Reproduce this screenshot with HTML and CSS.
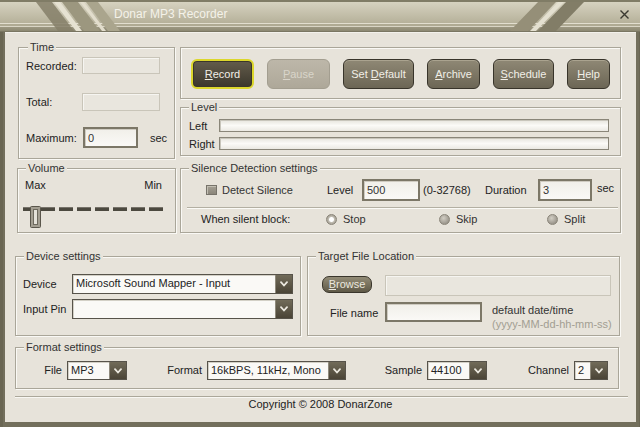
FILE: index.html
```html
<!DOCTYPE html>
<html>
<head>
<meta charset="utf-8">
<title>Donar MP3 Recorder</title>
<link rel="stylesheet" href="styles.css">
</head>
<body>
<div class="window">
  <div class="titlebar">
    <svg class="stripes" width="640" height="32" viewBox="0 0 640 32">
      <polygon points="36,2 52,2 74,31 58,31" fill="#857f68" opacity="0.85"/>
      <polygon points="54,2 60,2 82,31 76,31" fill="#e6e2d2"/>
      <polygon points="62,2 78,2 100,31 84,31" fill="#9c977f"/>
      <polygon points="80,2 84,2 106,31 102,31" fill="#e2ddcc"/>
      <polygon points="86,2 98,2 120,31 108,31" fill="#aaa58d"/>
      <polygon points="538,2 556,2 528,31 510,31" fill="#958f78"/>
      <polygon points="558,2 564,2 536,31 530,31" fill="#e4e0d0"/>
      <polygon points="566,2 584,2 556,31 538,31" fill="#827d67"/>
    </svg>
    <span class="title">Donar MP3 Recorder</span>
    <svg class="close" width="9" height="9" viewBox="0 0 9 9">
      <path d="M0.5 0.5 L8.5 8.5 M8.5 0.5 L0.5 8.5" stroke="#3a3930" stroke-width="1.4" fill="none"/>
    </svg>
  </div>

  <div class="content">
    <div class="row1">
      <div class="group time">
        <span class="legend">Time</span>
        <div class="trow r1"><span class="tlabel">Recorded:</span><span class="dbox w78 h17"></span></div>
        <div class="trow r2"><span class="tlabel">Total:</span><span class="dbox w78 h18"></span></div>
        <div class="trow"><span class="tlabel l57">Maximum:</span><span class="edit w55 h21">0</span><span class="unit">sec</span></div>
      </div>
      <div class="rightcol">
        <div class="group btns">
          <span class="btn rec w63"><u>R</u>ecord</span>
          <span class="btn off w63"><u>P</u>ause</span>
          <span class="btn w71">Set <u>D</u>efault</span>
          <span class="btn w53"><u>A</u>rchive</span>
          <span class="btn w61"><u>S</u>chedule</span>
          <span class="btn w43"><u>H</u>elp</span>
        </div>
        <div class="group level">
          <span class="legend">Level</span>
          <div class="lrow"><span class="llabel">Left</span><span class="bar"></span></div>
          <div class="lrow"><span class="llabel">Right</span><span class="bar"></span></div>
        </div>
      </div>
    </div>

    <div class="row2">
      <div class="group vol">
        <span class="legend">Volume</span>
        <div class="vrow"><span>Max</span><span>Min</span></div>
        <svg class="slider" width="145" height="24" viewBox="0 0 145 24">
          <g fill="#4c493f">
            <rect x="1" y="2" width="14" height="4"/>
            <rect x="19" y="2" width="14" height="4"/>
            <rect x="37" y="2" width="14" height="4"/>
            <rect x="55" y="2" width="14" height="4"/>
            <rect x="73" y="2" width="14" height="4"/>
            <rect x="91" y="2" width="14" height="4"/>
            <rect x="109" y="2" width="14" height="4"/>
            <rect x="127" y="2" width="14" height="4"/>
          </g>
          <g fill="#77736a">
            <rect x="1" y="2" width="14" height="1"/>
            <rect x="19" y="2" width="14" height="1"/>
            <rect x="37" y="2" width="14" height="1"/>
            <rect x="55" y="2" width="14" height="1"/>
            <rect x="73" y="2" width="14" height="1"/>
            <rect x="91" y="2" width="14" height="1"/>
            <rect x="109" y="2" width="14" height="1"/>
            <rect x="127" y="2" width="14" height="1"/>
          </g>
          <rect x="8.5" y="1.5" width="10" height="21" rx="1" fill="#a39e91" stroke="#5a564b"/>
          <rect x="11.5" y="4.5" width="4" height="15" fill="#e4e1d8" stroke="#6d695d"/>
        </svg>
      </div>
      <div class="group sil">
        <span class="legend">Silence Detection settings</span>
        <div class="srow1">
          <span class="ccell"><span class="chk"></span>Detect Silence</span>
          <span class="slab">Level</span>
          <span class="edit w58 h22">500</span>
          <span class="range">(0-32768)</span>
          <span class="dlab">Duration</span>
          <span class="edit w54 h22">3</span>
          <span class="sunit">sec</span>
        </div>
        <div class="ssep"></div>
        <div class="srow2">
          <span class="wlab">When silent block:</span>
          <span class="rcell w113"><span class="radio on"></span>Stop</span>
          <span class="rcell w108"><span class="radio"></span>Skip</span>
          <span class="rcell"><span class="radio"></span>Split</span>
        </div>
      </div>
    </div>

    <div class="row3">
      <div class="group dev">
        <span class="legend">Device settings</span>
        <div class="drow">
          <span class="dlabel">Device</span>
          <span class="combo w221 h20"><span class="ctext">Microsoft Sound Mapper - Input</span><span class="dd"><svg width="8" height="6" viewBox="0 0 8 6"><path d="M1 1.2 L4 4.5 L7 1.2" fill="none" stroke="#ebe8df" stroke-width="1.8" stroke-linecap="round"/></svg></span></span>
        </div>
        <div class="drow">
          <span class="dlabel">Input Pin</span>
          <span class="combo w221 h20"><span class="ctext"></span><span class="dd"><svg width="8" height="6" viewBox="0 0 8 6"><path d="M1 1.2 L4 4.5 L7 1.2" fill="none" stroke="#ebe8df" stroke-width="1.8" stroke-linecap="round"/></svg></span></span>
        </div>
      </div>
      <div class="group tgt">
        <span class="legend">Target File Location</span>
        <div class="trow1">
          <span class="browse"><u>B</u>rowse</span>
          <span class="dbox w226 h21"></span>
        </div>
        <div class="trow2">
          <span class="flabel">File name</span>
          <span class="edit w97 h20"></span>
          <span class="hint">default date/time<br><span class="grey">(yyyy-MM-dd-hh-mm-ss)</span></span>
        </div>
      </div>
    </div>

    <div class="group fmt">
      <span class="legend">Format settings</span>
      <span class="flab w51">File</span>
      <span class="combo w60 h19"><span class="ctext">MP3</span><span class="dd"><svg width="8" height="6" viewBox="0 0 8 6"><path d="M1 1.2 L4 4.5 L7 1.2" fill="none" stroke="#ebe8df" stroke-width="1.8" stroke-linecap="round"/></svg></span></span>
      <span class="flab w80">Format</span>
      <span class="combo w139 h19"><span class="ctext">16kBPS, 11kHz, Mono</span><span class="dd"><svg width="8" height="6" viewBox="0 0 8 6"><path d="M1 1.2 L4 4.5 L7 1.2" fill="none" stroke="#ebe8df" stroke-width="1.8" stroke-linecap="round"/></svg></span></span>
      <span class="flab w81">Sample</span>
      <span class="combo w60 h19"><span class="ctext">44100</span><span class="dd"><svg width="8" height="6" viewBox="0 0 8 6"><path d="M1 1.2 L4 4.5 L7 1.2" fill="none" stroke="#ebe8df" stroke-width="1.8" stroke-linecap="round"/></svg></span></span>
      <span class="flab w87">Channel</span>
      <span class="combo w34 h19"><span class="ctext">2</span><span class="dd"><svg width="8" height="6" viewBox="0 0 8 6"><path d="M1 1.2 L4 4.5 L7 1.2" fill="none" stroke="#ebe8df" stroke-width="1.8" stroke-linecap="round"/></svg></span></span>
    </div>

    <div class="sep"></div>
    <div class="copyright">Copyright © 2008 DonarZone</div>
  </div>
</div>
</body>
</html>
```
FILE: styles.css
```css
* { box-sizing: border-box; margin: 0; padding: 0; }
html, body { width: 640px; height: 427px; overflow: hidden; }
body {
  background: #6f6b58;
  font-family: "Liberation Sans", Arial, sans-serif;
  font-size: 11px;
  color: #222;
}
.window {
  width: 640px;
  height: 427px;
  display: flex;
  flex-direction: column;
  background: #736f5c;
  box-shadow: inset 3px 0 0 #6a6653, inset -1px 0 0 #6a6653;
}
.titlebar {
  position: relative;
  height: 32px;
  flex: none;
  display: flex;
  align-items: flex-start;
  background: linear-gradient(to bottom,
    #807c66 0, #807c66 2px,
    #d6d2c0 2px, #b6b19a 23px,
    #e2decf 23px, #e2decf 24px,
    #afaa93 24px, #afaa93 26px,
    #d9d5c5 26px, #d9d5c5 27px,
    #9d9882 27px, #8c8872 31px,
    #7a7662 31px);
}
.stripes { position: absolute; left: 0; top: 0; }
.title {
  position: relative;
  margin: 7px 0 0 114px;
  font-size: 12px;
  line-height: 14px;
  color: #f4f2e9;
}
.close { position: relative; margin: 10px 11px 0 auto; }

.content {
  flex: none;
  height: 390px;
  margin: 0 4px 0 5px;
  background: #e7e3da;
  border-top: 1px solid #f3f1eb;
  padding-top: 14px;
}

/* group boxes */
.group {
  position: relative;
  border: 1px solid #aaa699;
  box-shadow: inset 1px 1px 0 #faf9f5, 1px 1px 0 #faf9f5;
}
.legend {
  position: absolute;
  top: -7px;
  left: 8px;
  padding: 0 2px;
  line-height: 13px;
  background: #e7e3da;
  color: #333;
  white-space: nowrap;
}
.time .legend { left: 9px; }

.row1 { display: flex; align-items: flex-start; gap: 5px; margin-left: 13px; }
.row2 { display: flex; gap: 4px; margin: 9px 0 0 12px; }
.row3 { display: flex; gap: 6px; margin: 23px 0 0 10px; }

/* widths / heights */
.w34 { width: 34px; } .w43 { width: 43px; } .w51 { width: 51px; } .w53 { width: 53px; }
.w54 { width: 54px; } .w55 { width: 55px; } .w58 { width: 58px; } .w60 { width: 60px; }
.w61 { width: 61px; } .w63 { width: 63px; } .w71 { width: 71px; } .w78 { width: 78px; }
.w80 { width: 80px; } .w81 { width: 81px; } .w87 { width: 87px; } .w97 { width: 97px; }
.w108 { width: 108px; } .w113 { width: 113px; } .w139 { width: 139px; }
.w221 { width: 221px; } .w226 { width: 226px; }
.h17 { height: 17px; } .h18 { height: 18px; } .h19 { height: 19px; } .h20 { height: 20px; }
.h21 { height: 21px; } .h22 { height: 22px; }

/* text boxes */
.dbox {
  display: block;
  flex: none;
  background: #e9e6de;
  border: 1px solid #c9c5b9;
  box-shadow: inset 1px 1px 0 #f6f5f1;
}
.edit {
  display: flex;
  align-items: center;
  flex: none;
  padding-left: 3px;
  border: 2px solid #7c7767;
  background: linear-gradient(#f1efe9, #faf9f6);
  box-shadow: inset 1px 1px 0 #cfcbc1;
  color: #333;
}

/* time */
.time { width: 157px; height: 112px; padding: 9px 0 0 7px; }
.trow { display: flex; align-items: center; }
.tlabel { width: 56px; flex: none; }
.tlabel.l57 { width: 57px; }
.r1 { margin-bottom: 19px; }
.r2 { margin-bottom: 16px; }
.unit { margin-left: 12px; }

/* buttons */
.rightcol { display: flex; flex-direction: column; gap: 8px; width: 441px; }
.btns { height: 52px; display: flex; gap: 13px; padding: 11px 0 0 10px; }
.btn {
  flex: none;
  height: 30px;
  line-height: 28px;
  text-align: center;
  border: 1px solid #38342a;
  border-radius: 6px;
  background: linear-gradient(#8f8875, #6c6655);
  box-shadow: inset 0 1px 0 #aaa38f;
  color: #f1efe7;
}
.btn.rec {
  border: 2px solid #dcd72c;
  line-height: 26px;
  background: linear-gradient(#635c4b, #3b372c);
  box-shadow: inset 0 0 0 1px #3a362b;
}
.btn.off {
  border: 1px solid #a39e90;
  background: linear-gradient(#bdb7a9, #aea899);
  box-shadow: none;
  color: #d9d5ca;
}

/* level */
.level { height: 49px; padding: 11px 0 0 8px; }
.lrow { display: flex; align-items: center; height: 13px; }
.lrow + .lrow { margin-top: 5px; }
.llabel { width: 30px; flex: none; }
.bar {
  display: block;
  width: 390px;
  height: 13px;
  border: 1px solid #8a8679;
  background: linear-gradient(#e6e4dd, #fbfaf7 50%, #ebe9e3);
  box-shadow: inset 1px 1px 0 #c8c5bb;
}

/* volume */
.vol { width: 159px; height: 65px; padding: 10px 13px 0 7px; }
.vrow { display: flex; justify-content: space-between; line-height: 13px; }
.slider { display: block; margin: 13px 0 0 -3px; }

/* silence */
.sil { width: 441px; height: 65px; padding: 10px 0 0 6px; }
.srow1 { display: flex; align-items: center; height: 22px; margin-left: 19px; }
.ccell { display: flex; align-items: center; width: 121px; flex: none; color: #333; }
.chk {
  width: 11px;
  height: 10px;
  margin-right: 5px;
  border: 1px solid #77736a;
  background: linear-gradient(#a5a094, #8b867a);
  box-shadow: inset 1px 1px 0 #c2beb2;
}
.slab { width: 35px; flex: none; }
.range { width: 62px; margin-left: 3px; flex: none; }
.dlab { width: 53px; flex: none; }
.sunit { margin: -4px 0 0 5px; }
.ssep {
  margin-top: 6px;
  width: 431px;
  height: 2px;
  border-top: 1px solid #b3afa2;
  border-bottom: 1px solid #fbfaf6;
}
.srow2 { display: flex; align-items: center; height: 20px; margin-left: 14px; }
.wlab { width: 125px; flex: none; }
.rcell { display: flex; align-items: center; flex: none; color: #333; }
.radio {
  width: 11px;
  height: 11px;
  margin-right: 6px;
  border-radius: 50%;
  border: 1px solid #8a8579;
  background: radial-gradient(circle at 40% 35%, #d2cec4, #99948a 75%);
}
.radio.on {
  background: radial-gradient(circle at 50% 50%, #ffffff 0, #ffffff 2px, #c0bcb1 3px, #8f8a7e 100%);
}

/* device */
.dev { width: 286px; height: 80px; padding: 17px 0 0 7px; }
.drow { display: flex; align-items: center; }
.drow + .drow { margin-top: 5px; }
.dlabel { width: 49px; flex: none; }
.combo {
  display: flex;
  flex: none;
  border: 1px solid #57534a;
  background: #faf9f6;
  box-shadow: inset 1px 1px 0 #d3d0c6;
}
.ctext {
  flex: 1;
  padding-left: 3px;
  line-height: 17px;
  white-space: nowrap;
  overflow: hidden;
}
.dd {
  width: 17px;
  flex: none;
  display: flex;
  align-items: center;
  justify-content: center;
  border-left: 1px solid #8f8a7c;
  background: linear-gradient(#716b59, #4a4436);
}

/* target */
.tgt { width: 313px; height: 80px; padding: 18px 0 0 14px; }
.trow1 { display: flex; align-items: flex-start; }
.browse {
  flex: none;
  width: 50px;
  height: 17px;
  margin: 1px 13px 0 0;
  line-height: 15px;
  text-align: center;
  border: 1px solid #3a362c;
  border-radius: 7px;
  background: linear-gradient(#928b76, #5f5947);
  color: #ebe8df;
}
.trow2 { display: flex; align-items: flex-start; margin-top: 6px; }
.flabel { width: 63px; flex: none; padding-left: 8px; line-height: 22px; }
.hint { margin: 1px 0 0 10px; line-height: 14px; color: #333; }
.grey { color: #a29e92; }

/* format */
.fmt {
  width: 604px;
  height: 42px;
  margin: 11px 0 0 10px;
  display: flex;
  align-items: flex-start;
  padding-top: 13px;
}
.flab { flex: none; text-align: right; padding-right: 5px; line-height: 19px; }

.sep {
  margin: 7px 0 0 10px;
  width: 613px;
  height: 2px;
  border-top: 1px solid #aba79a;
  border-bottom: 1px solid #f8f7f3;
}
.copyright { text-align: center; line-height: 13px; margin-top: 0; color: #222; }
```
